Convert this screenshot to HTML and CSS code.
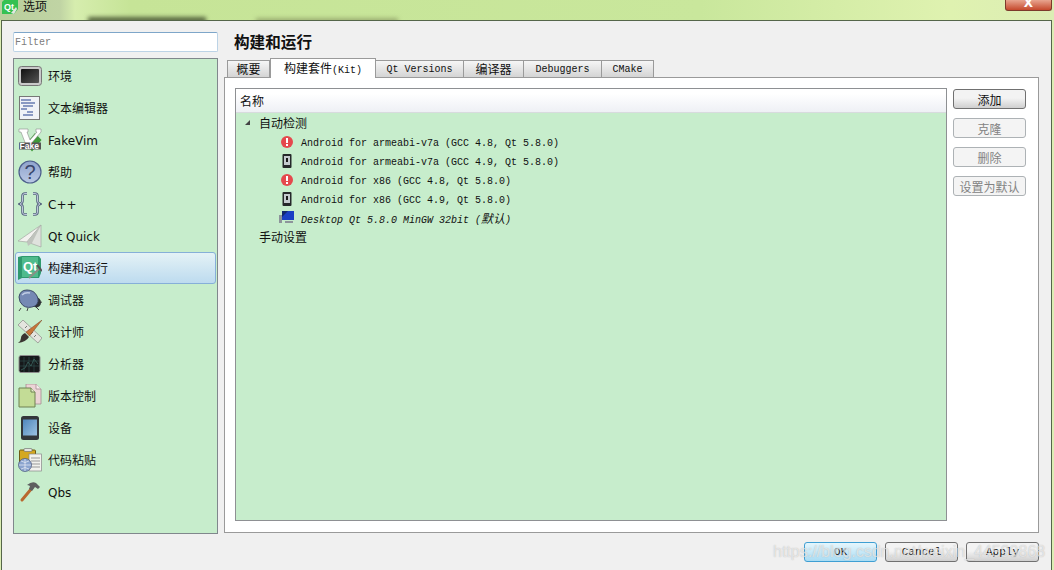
FILE: index.html
```html
<!DOCTYPE html>
<html lang="zh-CN">
<head>
    <meta charset="UTF-8">
    <title>选项</title>
    <link rel="stylesheet" href="styles.css">
</head>
<body>
    <header class="titlebar">
        <span class="blur-strip strip-a"></span>
        <span class="blur-strip strip-b"></span>
        <svg class="app-icon" width="16" height="14" viewBox="0 0 16 14"><path d="M2 0h14v9l-4 5H0V2z" fill="#35c152"/><path d="M9 13l5-6 1 2-3 5z" fill="#e4e6e2"/><text x="2" y="10" class="app-icon-text">Qt</text></svg>
        <span class="titlebar-text">选项</span>
        <div class="close-btn">X</div>
    </header>

    <div class="dialog">
        <div class="columns">
            <div class="left-col">
                <input class="filter" type="text" placeholder="Filter">
                <nav class="sidebar">
                    <div class="nav-item">
                        <svg class="nav-icon" viewBox="0 0 24 24"><defs><linearGradient id="scr" x1="0" y1="0" x2="1" y2="1"><stop offset="0" stop-color="#111"/><stop offset="1" stop-color="#555"/></linearGradient></defs><rect x="0.5" y="2.5" width="23" height="19" rx="3" fill="#c9c9c9" stroke="#777"/><rect x="3" y="5" width="18" height="14" rx="1" fill="url(#scr)"/></svg>
                        <span>环境</span>
                    </div>
                    <div class="nav-item">
                        <svg class="nav-icon" viewBox="0 0 24 24"><rect x="1.5" y="0.5" width="20" height="23" fill="#f0f2f7" stroke="#777"/><path d="M3 4h10M3 7h14M5 10h10M3 13h6M9 16h6M5 19h10" stroke="#25408f" fill="none"/></svg>
                        <span>文本编辑器</span>
                    </div>
                    <div class="nav-item">
                        <svg class="nav-icon" viewBox="0 0 24 24"><path d="M17 5l6.500 7L14 23.500 8 16z" fill="#3f9a3a"/><path d="M1 1h9v3H9l3 8 7-8h-1V1h5v3L12 17H8L3 4H1z" fill="#fff" stroke="#8d8d8d" stroke-width=".6"/><rect x="1" y="14.500" width="22" height="7" fill="#555"/><text x="1.500" y="21" class="fake-text">Fake</text></svg>
                        <span class="latin">FakeVim</span>
                    </div>
                    <div class="nav-item">
                        <svg class="nav-icon" viewBox="0 0 24 24"><defs><linearGradient id="hlp" x1="0" y1="0" x2="0" y2="1"><stop offset="0" stop-color="#8fa3cd"/><stop offset="1" stop-color="#b9c8e4"/></linearGradient></defs><circle cx="12" cy="12" r="11" fill="url(#hlp)" stroke="#4d5f8c" stroke-width="1.2"/><text x="12" y="19" class="help-text">?</text></svg>
                        <span>帮助</span>
                    </div>
                    <div class="nav-item">
                        <svg class="nav-icon" viewBox="0 0 24 24"><path d="M9 1.500H7Q4.500 1.500 4.500 4v5Q4.500 11 2 12q2.500 1 2.500 3v5Q4.500 22.500 7 22.500h2M15 1.500h2q2.500 0 2.500 2.500v5q0 2 2.500 3-2.500 1-2.500 3v5q0 2.500-2.500 2.500h-2" fill="none" stroke="#56647f" stroke-width="2.600"/><path d="M9 1.500H7Q4.500 1.500 4.500 4v5Q4.500 11 2 12q2.500 1 2.500 3v5Q4.500 22.500 7 22.500h2M15 1.500h2q2.500 0 2.500 2.500v5q0 2 2.500 3-2.500 1-2.500 3v5q0 2.500-2.500 2.500h-2" fill="none" stroke="#c9d3e4" stroke-width=".9"/></svg>
                        <span class="latin">C++</span>
                    </div>
                    <div class="nav-item">
                        <svg class="nav-icon" viewBox="0 0 24 24"><path d="M23 1L0 17l9 1z" fill="#f2f2ef" stroke="#a5a8a2" stroke-width=".7"/><path d="M23 1L9 18l14 5z" fill="#dfe2dd" stroke="#a5a8a2" stroke-width=".7"/><path d="M23 1L9 18l1 4 4-3z" fill="#bfc3bd"/></svg>
                        <span class="latin">Qt Quick</span>
                    </div>
                    <div class="nav-item selected">
                        <svg class="nav-icon" viewBox="0 0 24 24"><path d="M0 1l4-1h17l2 3v14l-2 5H4l-4 2z" fill="#2f9a6e"/><path d="M4 1h16v20H4z" fill="#4fbb8c"/><text x="5" y="15" class="qt-text">Qt</text><path d="M11 22l11-10" stroke="#8a8f86" stroke-width="2"/><path d="M19 9l5 6" stroke="#555" stroke-width="2"/></svg>
                        <span>构建和运行</span>
                    </div>
                    <div class="nav-item">
                        <svg class="nav-icon" viewBox="0 0 24 24"><path d="M3 20l-2 3M10 20l-1 3M18 19l3 3M21 15l3-1" stroke="#444" fill="none"/><ellipse cx="18.500" cy="14.500" rx="4.500" ry="5" fill="#2f3236"/><path d="M1 9Q2 2 9 2q7 0 10 6t-2 10Q10 21 5 17.500 1 14 1 9z" fill="#7589b4" stroke="#3d4a68"/><path d="M4 7q3-3 8-2" stroke="#c0cce4" stroke-width="1.500" fill="none"/></svg>
                        <span>调试器</span>
                    </div>
                    <div class="nav-item">
                        <svg class="nav-icon" viewBox="0 0 24 24"><path d="M5 0l19 18-4 5L0 5z" fill="#e4e5df" stroke="#8a8a85" stroke-width=".7"/><path d="M7 8l2-2M10 11l2-2M13 14l2-2M16 17l2-2" stroke="#777"/><path d="M24 0L8 12l3.500 4z" fill="#c8763a" stroke="#7a4520" stroke-width=".5"/><path d="M7 13l4 4q-3 5-11 6 3-2 3-5t4-5z" fill="#3a3530"/></svg>
                        <span>设计师</span>
                    </div>
                    <div class="nav-item">
                        <svg class="nav-icon" viewBox="0 0 24 24"><rect x="1" y="3.500" width="21" height="17" rx="2" fill="#16181a" stroke="#8d8d8d"/><path d="M6 5v15M11 5v15M16 5v15M2 9h19M2 14h19" stroke="#2f5452" stroke-width=".6"/><path d="M3 18l4-2 3-6 3 4 3-7 4 5" stroke="#3f6f68" fill="none" stroke-width=".7"/></svg>
                        <span>分析器</span>
                    </div>
                    <div class="nav-item">
                        <svg class="nav-icon" viewBox="0 0 24 24"><path d="M8 0h10l5 5v15H8z" fill="#ecd4d6" stroke="#a58d90" stroke-width=".8"/><path d="M18 0v5h5" fill="#f7ecec" stroke="#a58d90" stroke-width=".8"/><path d="M1 4h12l4 4v15H1z" fill="#c3dc96" stroke="#6f8153"/><path d="M13 4v4h4" fill="#e5f0cc" stroke="#6f8153"/></svg>
                        <span>版本控制</span>
                    </div>
                    <div class="nav-item">
                        <svg class="nav-icon" viewBox="0 0 24 24"><defs><linearGradient id="dev" x1="0" y1="0" x2="1" y2="1"><stop offset="0" stop-color="#4f86bd"/><stop offset="1" stop-color="#9cc2e2"/></linearGradient></defs><rect x="3" y="0" width="18" height="24" rx="2.500" fill="#33363a"/><rect x="5" y="3.500" width="14" height="16" fill="url(#dev)"/></svg>
                        <span>设备</span>
                    </div>
                    <div class="nav-item">
                        <svg class="nav-icon" viewBox="0 0 24 24"><rect x="1.500" y="2" width="16" height="15" rx="1" fill="#d4a820" stroke="#6f5a12"/><rect x="6" y="0.500" width="8" height="3" rx="1" fill="#e4e4e0" stroke="#666" stroke-width=".6"/><rect x="11" y="6" width="12.500" height="17" fill="#f2f2ee" stroke="#888" stroke-width=".7"/><path d="M13 10h9M13 13h9M13 16h9M13 19h9" stroke="#999"/><circle cx="7" cy="17" r="6.500" fill="#8ba4cf" stroke="#47557a" stroke-width=".7"/><path d="M1 17h12M7 11v12M3 13q4 3 8 0M3 21q4-3 8 0" stroke="#eef1f7" stroke-width=".7" fill="none"/></svg>
                        <span>代码粘贴</span>
                    </div>
                    <div class="nav-item">
                        <svg class="nav-icon" viewBox="0 0 24 24"><path d="M4 20L14 8" stroke="#b9682f" stroke-width="3" stroke-linecap="round"/><path d="M9 5Q14 1 18 3l4 4-2 2-3-2-3 4-3-2 1-3q-2-1-3-1z" fill="#5d5f60"/></svg>
                        <span class="latin">Qbs</span>
                    </div>
                </nav>
            </div>

            <main class="right-col">
                <h1 class="page-title">构建和运行</h1>
                <div class="tabs">
                    <div class="tab cjk tab-summary">概要</div>
                    <div class="tab active tab-kits"><span class="cjk">构建套件</span>(Kit)</div>
                    <div class="tab tab-versions">Qt Versions</div>
                    <div class="tab cjk tab-compilers">编译器</div>
                    <div class="tab tab-debuggers">Debuggers</div>
                    <div class="tab tab-cmake">CMake</div>
                </div>
                <div class="pane">
                    <div class="tree">
                        <div class="tree-header">名称</div>
                        <div class="tree-row group"><i class="arrow"></i><span>自动检测</span></div>
                        <div class="tree-row kit">
                            <svg class="kit-icon" viewBox="0 0 12 12"><circle cx="6" cy="6" r="6" fill="#e5484d"/><rect x="5" y="2" width="2" height="5" fill="#fff"/><rect x="5" y="8" width="2" height="2" fill="#fff"/></svg>
                            <span>Android for armeabi-v7a (GCC 4.8, Qt 5.8.0)</span>
                        </div>
                        <div class="tree-row kit">
                            <svg class="kit-icon tall" viewBox="0 0 12 14"><rect x="1.500" y="0" width="9" height="14" rx="1" fill="#26282a"/><rect x="3" y="2" width="6" height="9" fill="#c4cace"/><rect x="5" y="4" width="2" height="4" fill="#1a1a1a"/></svg>
                            <span>Android for armeabi-v7a (GCC 4.9, Qt 5.8.0)</span>
                        </div>
                        <div class="tree-row kit">
                            <svg class="kit-icon" viewBox="0 0 12 12"><circle cx="6" cy="6" r="6" fill="#e5484d"/><rect x="5" y="2" width="2" height="5" fill="#fff"/><rect x="5" y="8" width="2" height="2" fill="#fff"/></svg>
                            <span>Android for x86 (GCC 4.8, Qt 5.8.0)</span>
                        </div>
                        <div class="tree-row kit">
                            <svg class="kit-icon tall" viewBox="0 0 12 14"><rect x="1.500" y="0" width="9" height="14" rx="1" fill="#26282a"/><rect x="3" y="2" width="6" height="9" fill="#c4cace"/><rect x="5" y="4" width="2" height="4" fill="#1a1a1a"/></svg>
                            <span>Android for x86 (GCC 4.9, Qt 5.8.0)</span>
                        </div>
                        <div class="tree-row kit default">
                            <svg class="kit-icon wide" viewBox="0 0 15 13"><rect x="3" y="0" width="12" height="9" fill="#1a3fc4"/><path d="M3 0l6 0-6 6z" fill="#12286f"/><path d="M0 4h3v8H0zM6 10h8v2H6z" fill="#8d949b"/></svg>
                            <span>Desktop Qt 5.8.0 MinGW 32bit (<span class="cjk">默认</span>)</span>
                        </div>
                        <div class="tree-row group"><span>手动设置</span></div>
                    </div>
                    <div class="side-buttons">
                        <button class="btn side-btn">添加</button>
                        <button class="btn side-btn" disabled>克隆</button>
                        <button class="btn side-btn" disabled>删除</button>
                        <button class="btn side-btn" disabled>设置为默认</button>
                    </div>
                </div>
            </main>
        </div>

        <footer class="dialog-buttons">
            <button class="btn mono-btn ok">OK</button>
            <button class="btn mono-btn">Cancel</button>
            <button class="btn mono-btn">Apply</button>
        </footer>
    </div>

    <div class="watermark">https://blog.csdn.net/weixin_44599868</div>
</body>
</html>
```

FILE: styles.css
```css
html, body {
    margin: 0;
    padding: 0;
}

body {
    position: relative;
    width: 1054px;
    height: 570px;
    overflow: hidden;
    display: flex;
    flex-direction: column;
    background-color: #dcedb4;
    font-family: "DejaVu Sans", "Noto Sans CJK SC", sans-serif;
    font-size: 12px;
    color: #111;
}

.cjk {
    font-family: "Noto Sans CJK SC", sans-serif;
}

/* title bar */
.titlebar {
    position: relative;
    height: 20px;
    flex: none;
    display: flex;
    align-items: flex-start;
    padding-left: 2px;
    box-sizing: border-box;
    overflow: hidden;
    background: linear-gradient(to right, #b9cf9c 0, #c0d4a4 60px, #d6edae 75px, #c6e497 130px, #c9e79c 700px, #dff2b0 950px, #dcedb4 1054px);
}

.blur-strip {
    position: absolute;
    filter: blur(2px);
}

.strip-a {
    left: 88px;
    top: 17px;
    width: 118px;
    height: 6px;
    background-color: #57663f;
}

.strip-b {
    left: 256px;
    top: 18px;
    width: 142px;
    height: 6px;
    background-color: #9db073;
}

.app-icon {
    flex: none;
    position: relative;
}

.app-icon-text {
    font-family: "Liberation Sans", sans-serif;
    font-size: 9px;
    font-weight: bold;
    fill: #fff;
}

.titlebar-text {
    position: relative;
    margin-left: 5px;
    font-family: "Noto Sans CJK SC", sans-serif;
    line-height: 12px;
}

.close-btn {
    width: 47px;
    height: 11px;
    margin-left: auto;
    margin-right: 2px;
    box-sizing: border-box;
    border: 1px solid #7c3a2c;
    border-top: none;
    border-radius: 0 0 3px 3px;
    background: linear-gradient(to bottom, #e8a58f, #c5492c);
    color: #fff;
    font-weight: bold;
    font-size: 12px;
    line-height: 7px;
    text-align: center;
    overflow: hidden;
}

/* dialog */
.dialog {
    flex: 1;
    margin: 0 2px 0 1px;
    padding: 11px 12px 0 11px;
    border-top: 1px solid #55664a;
    border-left: 1px solid #55664a;
    border-right: 1px solid #55664a;
    background-color: #f0f0f0;
}

.columns {
    display: flex;
    gap: 6px;
    height: 502px;
}

.left-col {
    width: 205px;
    flex: none;
    display: flex;
    flex-direction: column;
    gap: 6px;
}

.filter {
    height: 20px;
    box-sizing: border-box;
    padding: 1px 1px 0;
    border: 1px solid #bcd3e6;
    border-top-color: #7ea6c9;
    border-radius: 2px;
    background: #fff;
    font-family: "Liberation Mono", monospace;
    font-size: 10px;
}

.filter::placeholder {
    color: #7d7d7d;
}

.sidebar {
    flex: 1;
    box-sizing: border-box;
    padding: 1px 1px 0;
    border: 1px solid #80878c;
    background-color: #c7edcc;
}

.nav-item {
    height: 32px;
    box-sizing: border-box;
    display: flex;
    align-items: center;
    gap: 6px;
    padding-left: 3px;
    font-size: 12px;
    white-space: nowrap;
}

.nav-item span {
    padding-bottom: 2px;
}

.nav-item .latin {
    padding-top: 2px;
    padding-bottom: 0;
}

.nav-item.selected {
    border: 1px solid #86afd8;
    border-radius: 3px;
    padding-left: 2px;
    background: linear-gradient(to bottom, #e4f2f6, #bddbef);
}

.nav-icon {
    width: 24px;
    height: 24px;
    flex: none;
}

.fake-text {
    font-family: "Liberation Sans", sans-serif;
    font-size: 8.500px;
    font-weight: bold;
    fill: #fff;
}

.help-text {
    font-family: "Liberation Sans", sans-serif;
    font-size: 20px;
    fill: #39456a;
    text-anchor: middle;
}

.qt-text {
    font-family: "Liberation Sans", sans-serif;
    font-size: 13px;
    font-weight: bold;
    fill: #fff;
}

/* right side */
.right-col {
    flex: 1;
    display: flex;
    flex-direction: column;
}

.page-title {
    margin: 0;
    height: 26px;
    padding-left: 10px;
    font-family: "Noto Sans CJK SC", sans-serif;
    font-size: 15.6px;
    font-weight: bold;
    line-height: 19px;
}

.tabs {
    height: 19px;
    flex: none;
    display: flex;
    align-items: flex-end;
    padding-left: 3px;
    position: relative;
    z-index: 1;
}

.tab {
    height: 17px;
    box-sizing: border-box;
    border: 1px solid #9a9a9a;
    border-left-width: 0;
    border-bottom: none;
    background: linear-gradient(to bottom, #f6f6f6, #d4d4d4);
    font-family: "Liberation Mono", monospace;
    font-size: 10px;
    line-height: 18px;
    text-align: center;
}

.tab.cjk {
    font-family: "Noto Sans CJK SC", sans-serif;
    font-size: 12px;
    line-height: 16px;
}

.tab-summary {
    width: 43px;
    border-left-width: 1px;
}

.tab-kits {
    width: 106px;
}

.tab-versions {
    width: 88px;
}

.tab-compilers {
    width: 60px;
}

.tab-debuggers {
    width: 78px;
}

.tab-cmake {
    width: 52px;
}

.tab.active {
    height: 20px;
    margin-bottom: -1px;
    border-left-width: 1px;
    background: #fff;
    line-height: 18px;
}

.tab.active .cjk {
    font-size: 12px;
}

.pane {
    flex: none;
    display: flex;
    gap: 6px;
    box-sizing: border-box;
    height: 456px;
    padding: 10px 12px 11px 10px;
    border: 1px solid #9a9a9a;
    background: #fff;
}

.tree {
    flex: 1;
    border: 1px solid #8e9093;
    background-color: #c7edcc;
}

.tree-header {
    height: 24px;
    box-sizing: border-box;
    padding-left: 4px;
    border-bottom: 1px solid #d8dbde;
    background: linear-gradient(to bottom, #fff 20%, #eef0f5);
    font-family: "Noto Sans CJK SC", sans-serif;
    line-height: 24px;
}

.tree-row {
    height: 19px;
    display: flex;
    align-items: center;
    white-space: nowrap;
}

.group {
    padding-left: 23px;
    font-family: "Noto Sans CJK SC", sans-serif;
    position: relative;
}

.arrow {
    position: absolute;
    left: 9px;
    top: 7px;
    border-left: 5px solid transparent;
    border-bottom: 5px solid #444;
}

.kit {
    padding-left: 45px;
    font-family: "Liberation Mono", monospace;
    font-size: 10px;
}

.kit span {
    padding-top: 4px;
}

.kit.default span {
    padding-top: 0;
}

.kit .cjk {
    font-size: 12px;
}

.kit-icon {
    width: 12px;
    height: 12px;
    flex: none;
    margin-right: 8px;
}

.kit-icon.tall {
    height: 14px;
}

.kit-icon.wide {
    width: 15px;
    height: 13px;
    margin-left: -2px;
    margin-right: 7px;
}

.default {
    font-style: italic;
}

.side-buttons {
    width: 73px;
    flex: none;
    display: flex;
    flex-direction: column;
    gap: 9px;
    padding-top: 1px;
}

.btn {
    width: 73px;
    height: 20px;
    padding: 0;
    box-sizing: border-box;
    border: 1px solid #707070;
    border-radius: 3px;
    background: linear-gradient(to bottom, #f3f3f3 45%, #cfcfcf);
    font-family: "Noto Sans CJK SC", sans-serif;
    font-size: 12px;
    color: #111;
}

.btn:disabled {
    border-color: #adb2b5;
    background: #f4f4f4;
    color: #838383;
}

.dialog-buttons {
    display: flex;
    justify-content: flex-end;
    gap: 8px;
    margin-top: 8px;
}

.mono-btn {
    font-family: "Liberation Mono", monospace;
    font-size: 11px;
}

.ok {
    border-color: #3f9fd3;
    background: linear-gradient(to bottom, #e6f6fc, #a9dcf3);
}

.watermark {
    position: absolute;
    left: 773px;
    top: 543px;
    font-family: "Liberation Sans", sans-serif;
    font-size: 16px;
    line-height: 18px;
    color: rgba(255, 255, 255, .6);
    text-shadow: 0 0 1px rgba(120, 120, 120, .5);
    white-space: nowrap;
}
```
